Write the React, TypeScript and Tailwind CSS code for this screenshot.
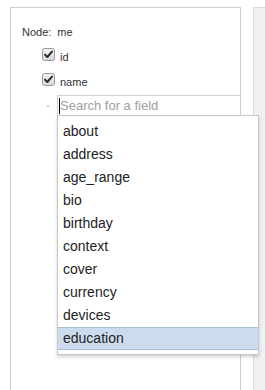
const fields = [
  'about',
  'address',
  'age_range',
  'bio',
  'birthday',
  'context',
  'cover',
  'currency',
  'devices',
  'education',
];

function Check() {
  return (
    <svg width="13" height="13" viewBox="0 0 13 13" className="shrink-0">
      <defs>
        <linearGradient id="cbg" x1="0" y1="0" x2="0" y2="1">
          <stop offset="0" stopColor="#f4f4f4" />
          <stop offset="1" stopColor="#d6d6d6" />
        </linearGradient>
      </defs>
      <rect x="0.5" y="0.5" width="12" height="12" rx="2" fill="url(#cbg)" stroke="#9a9a9a" />
      <path d="M3 6.6 L5.3 9 L10 3.6" fill="none" stroke="#2b2b2b" strokeWidth="2" strokeLinecap="round" strokeLinejoin="round" />
    </svg>
  );
}

function FieldRow({ label }: { label: string }) {
  return (
    <div className="flex items-center gap-[5px] pl-[20px] h-[13px]">
      <Check />
      <span className="text-[11px] leading-[13px] text-[#333] mt-[6px]">{label}</span>
    </div>
  );
}

export default function App() {
  return (
    <div
      className="w-[265px] h-[390px] overflow-hidden bg-white flex gap-[12px] pt-[7px] pl-[10px]"
      style={{ fontFamily: '"Liberation Sans", Arial, sans-serif' }}
    >
      <div className="w-[231px] h-[400px] shrink-0 border border-[#cfcfcf] pt-[18px] pl-[11px]">
        <div className="text-[11px] leading-[13px] text-[#333]">
          Node:<span className="ml-[6px]">me</span>
        </div>
        <div className="mt-[9px] flex flex-col gap-[12px]">
          <FieldRow label="id" />
          <FieldRow label="name" />
        </div>
        <div className="relative mt-[9px] flex items-center">
          <span className="w-[2px] h-[2px] bg-[#ccc] ml-[25px] mr-[8px]" />
          <div className="flex-1 h-[21px] border border-[#d4d4d4] border-r-0 flex items-center pl-px">
            <span className="w-px h-[16px] bg-black" />
            <span className="text-[13px] text-[#a0a0a0] leading-none">Search for a field</span>
          </div>
          <div className="absolute left-[35px] top-[20px] w-[202px] bg-white border border-[#c8c8c8] shadow-[0_2px_3px_rgba(0,0,0,0.18)] py-[4px]">
            {fields.map((f) => (
              <div
                key={f}
                className={
                  f === 'education'
                    ? 'h-[23px] flex items-center pl-[5px] text-[14px] text-[#222] bg-[#cbdcee] border-y border-[#a9bed6]'
                    : 'h-[23px] flex items-center pl-[5px] text-[14px] text-[#222]'
                }
              >
                {f}
              </div>
            ))}
          </div>
        </div>
      </div>
      <div className="w-[40px] h-[400px] shrink-0 bg-[#f0f0f0] border border-[#dcdcdc]" />
    </div>
  );
}
